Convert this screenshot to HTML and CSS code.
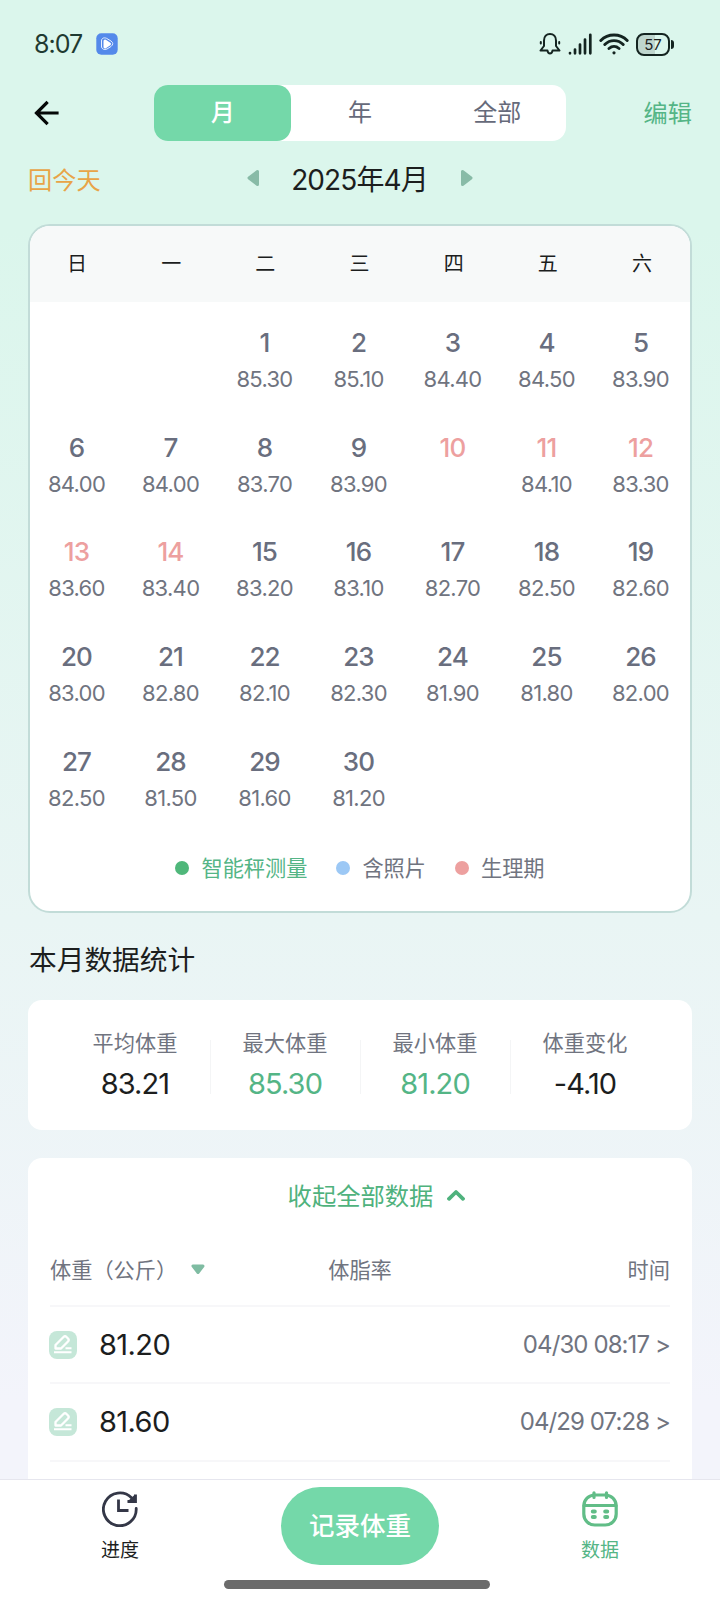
FILE: index.html
```
<!DOCTYPE html>
<html lang="zh-CN">

<head>
    <title>体重数据</title>
    <meta charset="utf-8">
    <meta name="viewport" content="width=device-width, initial-scale=1">
    <link rel="stylesheet" href="styles.css">
</head>

<body>
<div class="status-bar">
    <span class="clock">8:07</span>
    <svg class="app-icon" width="22" height="22" viewBox="0 0 22 22">
        <rect x="0.3" y="0.3" width="21.4" height="21.4" rx="5" fill="#5489ea"/>
        <path d="M5.500 8C5.500 5 8 4.300 10.500 5.300L15 8Q18.500 10.500 15 13.500L11 16C8 17.200 6 16 5.500 14Z" fill="#5489ea" stroke="#e6efff" stroke-width="1"/>
        <path d="M9 8L13.500 11L9 14Z" fill="#fff" stroke="#fff" stroke-width="3" stroke-linejoin="round"/>
    </svg>
    <div class="status-icons">
        <svg width="22" height="24" viewBox="0 0 22 24" fill="none" stroke="#142420" stroke-width="2" stroke-linejoin="round" stroke-linecap="round">
            <path d="M5 14V8.500C5 4.500 7.500 2 11 2S17 4.500 17 8.500V14L20.500 18.500H13.500C13 22.500 9 22.500 8.500 18.500H1.500Z"/>
            <path d="M1.800 10V11.500M20.200 10V11.500"/>
        </svg>
        <svg width="24" height="22" viewBox="0 0 24 22" fill="none" stroke="#142420" stroke-width="2.700" stroke-linecap="round">
            <path d="M2 20V20.300M7 16.500V20.300M12 11.500V20.300M17 6.500V20.300M22.300 1.800V20.300"/>
        </svg>
        <svg width="30" height="22" viewBox="0 0 30 22" fill="none" stroke="#142420" stroke-width="2.900" stroke-linecap="round">
            <path d="M1.800 7.500C9 0.200 21 0.200 28.200 7.500M5.800 11.500C11 6.300 19 6.300 24.200 11.500M10 15.500C13 12.900 17 12.900 20 15.500"/>
            <circle cx="15" cy="19.800" r="1.600" fill="#142420" stroke="none"/>
        </svg>
        <div class="battery"><span>57</span></div>
    </div>
</div>

<div class="header">
    <svg class="back" width="26" height="26" viewBox="0 0 26 26" fill="none" stroke="#050807" stroke-width="3.200" stroke-linecap="square">
        <path d="M23 13H3M12.500 3L2.500 13L12.500 23"/>
    </svg>
    <div class="tabs">
        <div class="tab tab-active">月</div>
        <div class="tab">年</div>
        <div class="tab">全部</div>
    </div>
    <div class="edit">编辑</div>
</div>

<div class="month-bar">
    <div class="today">回今天</div>
    <div class="month">
        <svg width="12" height="18" viewBox="0 0 12 18"><path d="M10.500 2.500V15.500L2 9Z" fill="#88bba7" stroke="#88bba7" stroke-width="3" stroke-linejoin="round"/></svg>
        <span class="month-name">2025年4月</span>
        <svg width="12" height="18" viewBox="0 0 12 18"><path d="M1.500 2.500V15.500L10 9Z" fill="#88bba7" stroke="#88bba7" stroke-width="3" stroke-linejoin="round"/></svg>
    </div>
</div>

<div class="calendar">
    <div class="week">
        <div>日</div>
        <div>一</div>
        <div>二</div>
        <div>三</div>
        <div>四</div>
        <div>五</div>
        <div>六</div>
    </div>
    <div id="days" class="days"></div>
    <div class="legend">
        <div class="legend-item legend-scale">智能秤测量</div>
        <div class="legend-item legend-photo">含照片</div>
        <div class="legend-item legend-period">生理期</div>
    </div>
</div>

<script>
        // Calendar
        const weights = [
            '85.30', '85.10', '84.40', '84.50', '83.90',
            '84.00', '84.00', '83.70', '83.90', '', '84.10', '83.30',
            '83.60', '83.40', '83.20', '83.10', '82.70', '82.50', '82.60',
            '83.00', '82.80', '82.10', '82.30', '81.90', '81.80', '82.00',
            '82.50', '81.50', '81.60', '81.20'
        ];
        const firstWeekday = 2;
        let html = '';
        for (let i = 0; i < firstWeekday; i++) {
            html += '<div class="day"></div>';
        }
        weights.forEach((weight, i) => {
            const day = i + 1;
            const period = day >= 10 && day <= 14;
            html += `<div class="day"><div class="day-number${period ? ' period' : ''}">${day}</div><div class="day-weight">${weight}</div></div>`;
        });
        document.getElementById('days').innerHTML = html;
    </script>

<div class="title">本月数据统计</div>
<div class="stats">
    <div class="stat">
        <div class="stat-label">平均体重</div>
        <div class="stat-value">83.21</div>
    </div>
    <div class="stat">
        <div class="stat-label">最大体重</div>
        <div class="stat-value green">85.30</div>
    </div>
    <div class="stat">
        <div class="stat-label">最小体重</div>
        <div class="stat-value green">81.20</div>
    </div>
    <div class="stat">
        <div class="stat-label">体重变化</div>
        <div class="stat-value">-4.10</div>
    </div>
</div>

<div class="records">
    <div class="toggle">
        收起全部数据
        <svg width="18" height="12" viewBox="0 0 18 12" fill="none" stroke="#4fb27d" stroke-width="3.800" stroke-linecap="round" stroke-linejoin="round"><path d="M2 9.800L9 3L16 9.800"/></svg>
    </div>
    <div class="record-head">
        <div class="head-weight">体重（公斤）<svg width="14" height="11" viewBox="0 0 14 11"><path d="M2 2H12L7 8.500Z" fill="#7fbca2" stroke="#7fbca2" stroke-width="3" stroke-linejoin="round"/></svg></div>
        <div class="head-fat">体脂率</div>
        <div class="head-time">时间</div>
    </div>
    <div class="record">
        <svg width="28" height="28" viewBox="0 0 28 28">
            <rect width="28" height="28" rx="8" fill="#c5e7d8"/>
            <path d="M6.500 17.500V14L14.500 6Q16 4.500 17.500 6L19 7.500Q20.500 9 19 10.500L12 17.500Z" fill="none" stroke="#fff" stroke-width="2.300" stroke-linejoin="round"/>
            <path d="M5 21.200H22.500M16.500 17.200H22.500" stroke="#fff" stroke-width="2.100"/>
        </svg>
        <div class="record-weight">81.20</div>
        <div class="record-time">04/30 08:17 &gt;</div>
    </div>
    <div class="record">
        <svg width="28" height="28" viewBox="0 0 28 28">
            <rect width="28" height="28" rx="8" fill="#c5e7d8"/>
            <path d="M6.500 17.500V14L14.500 6Q16 4.500 17.500 6L19 7.500Q20.500 9 19 10.500L12 17.500Z" fill="none" stroke="#fff" stroke-width="2.300" stroke-linejoin="round"/>
            <path d="M5 21.200H22.500M16.500 17.200H22.500" stroke="#fff" stroke-width="2.100"/>
        </svg>
        <div class="record-weight">81.60</div>
        <div class="record-time">04/29 07:28 &gt;</div>
    </div>
</div>

<div class="nav">
    <div class="nav-row">
        <div class="nav-item">
            <svg width="36" height="36" viewBox="0 0 36 36" fill="none" stroke="#343747" stroke-width="2.800">
                <path d="M34.200 17.500A16.400 16.400 0 1 1 29.500 6.800" stroke-linecap="round"/>
                <path d="M16.500 8.500V19.500H26.500"/>
                <path d="M33 3.500V10.500H25.500Z" fill="#343747" stroke="none"/>
                <path d="M33.500 3.500V10.500H25.500"/>
            </svg>
            <div>进度</div>
        </div>
        <div class="nav-button">记录体重</div>
        <div class="nav-item nav-item-active">
            <svg width="36" height="36" viewBox="0 0 36 36" fill="none" stroke="#61bd87" stroke-width="3.200" stroke-linecap="round">
                <rect x="1.800" y="4" width="32.400" height="30" rx="11"/>
                <path d="M2 14.500H34M12 1.800V6.500M24.500 1.800V6.500"/>
                <path d="M10.800 20.500H12.800M23.200 20.500H25.200M10.800 26H12.800M23.200 26H25.200" stroke-width="4"/>
            </svg>
            <div>数据</div>
        </div>
    </div>
    <div class="home-bar"></div>
</div>
</body>

</html>
```
FILE: styles.css
```
* {
    box-sizing: border-box;
}

body {
    display: flex;
    flex-direction: column;
    height: 1600px;
    margin: 0;
    overflow: hidden;
    background: linear-gradient(#dbf6ec 0, #dbf6ec 230px, #e9f5f4 920px, #f3f4fb 1400px);
    color: #1c1e1e;
    font-family: Inter, "Noto Sans CJK SC", sans-serif;
}

.status-bar {
    display: flex;
    align-items: center;
    height: 88px;
    padding: 0 46px 0 34px;
    flex-shrink: 0;
}

.clock {
    width: 62px;
    font-size: 25px;
    letter-spacing: -1px;
    color: #1f3a31;
}

.status-icons {
    display: flex;
    align-items: center;
    gap: 7px;
    margin-left: auto;
}

.battery {
    position: relative;
    width: 34px;
    height: 23px;
    margin-right: 4px;
    border: 2px solid #142420;
    border-radius: 8px;
    background: linear-gradient(90deg, #bfd6ce 57%, transparent 57%);
    font-size: 15px;
    line-height: 19px;
    text-align: center;
}

.battery::after {
    content: "";
    position: absolute;
    top: 5px;
    right: -6px;
    width: 3px;
    height: 9px;
    border-radius: 0 3px 3px 0;
    background: #142420;
}

.header {
    display: flex;
    align-items: center;
    height: 50px;
    padding: 0 28px 0 34px;
    flex-shrink: 0;
}

.tabs {
    display: flex;
    width: 412px;
    height: 56px;
    margin-left: 94px;
    border-radius: 14px;
    background: white;
}

.tab {
    flex: 1;
    border-radius: 14px;
    color: #666a7a;
    font-size: 24px;
    line-height: 56px;
    text-align: center;
}

.tab-active {
    background: #74d8a9;
    color: white;
    font-weight: 500;
}

.edit {
    margin-left: auto;
    padding-bottom: 4px;
    color: #54b586;
    font-size: 24.200px;
}

.month-bar {
    display: grid;
    grid-template-columns: 1fr 238px 1fr;
    align-items: center;
    height: 86px;
    padding: 0 28px 6px;
    flex-shrink: 0;
}

.today {
    color: #e8a447;
    font-size: 24.200px;
}

.month {
    display: flex;
    align-items: center;
    justify-content: space-between;
    padding: 0 6px;
}

.month-name {
    margin-left: -1px;
    font-size: 28px;
    letter-spacing: -0.900px;
}

.calendar {
    height: 689px;
    margin: 0 28px;
    border: 2px solid #c2dcd8;
    border-radius: 22px;
    background: white;
    overflow: hidden;
    flex-shrink: 0;
}

.week {
    display: grid;
    grid-template-columns: repeat(7, 1fr);
    padding-right: 1px;
    background: #f7f9f9;
    font-size: 20px;
    line-height: 76px;
    text-align: center;
}

.days {
    display: grid;
    grid-template-columns: repeat(7, 1fr);
    grid-auto-rows: 104.700px;
    height: 524px;
    padding-right: 2px;
    text-align: center;
}

.day {
    padding: 24px 1px 0 0;
}

.day-number {
    color: #696e7e;
    font-size: 26px;
    font-weight: 500;
    line-height: 34px;
    letter-spacing: -0.900px;
}

.period {
    color: #eda09f;
}

.day-weight {
    color: #70747f;
    font-size: 22px;
    line-height: 39px;
    letter-spacing: -0.700px;
}

.legend {
    display: flex;
    justify-content: center;
    gap: 29px;
    line-height: 84px;
}

.legend-item {
    display: flex;
    align-items: center;
    gap: 12px;
    color: #70747f;
    font-size: 21.200px;
}

.legend-item::before {
    content: "";
    width: 14px;
    height: 14px;
    border-radius: 50%;
}

.legend-scale {
    color: #54b586;
}

.legend-scale::before {
    background: #4fb77a;
}

.legend-photo::before {
    background: #9cc8f5;
}

.legend-period::before {
    background: #eda09f;
}

.title {
    height: 87px;
    padding: 3px 29px 0;
    font-size: 27.700px;
    line-height: 88px;
    flex-shrink: 0;
}

.stats {
    display: flex;
    height: 130px;
    margin: 0 28px 28px;
    padding: 24px 32px;
    border-radius: 14px;
    background: white;
    text-align: center;
    flex-shrink: 0;
}

.stat {
    position: relative;
    flex: 1;
}

.stat + .stat::before {
    content: "";
    position: absolute;
    top: 16px;
    left: 0;
    width: 1px;
    height: 54px;
    background: #f4f5f6;
}

.stat-label {
    color: #70747f;
    font-size: 21.200px;
    line-height: 38px;
}

.stat-value {
    font-size: 29px;
    line-height: 43px;
    letter-spacing: -0.900px;
}

.green {
    color: #54b586;
}

.records {
    flex: 1;
    margin: 0 28px;
    padding: 0 22px;
    border-radius: 14px 14px 0 0;
    background: white;
}

.toggle {
    display: flex;
    align-items: center;
    justify-content: center;
    gap: 14px;
    height: 73px;
    padding-left: 33px;
    color: #4fb27d;
    font-size: 24.300px;
}

.record-head {
    display: grid;
    grid-template-columns: 1fr 1fr 1fr;
    height: 76px;
    padding-top: 5px;
    border-bottom: 2px solid #f7f7f9;
    color: #70747f;
    font-size: 21.200px;
    line-height: 69px;
}

.head-weight {
    white-space: nowrap;
}

.head-weight svg {
    margin-left: 14px;
    vertical-align: 3px;
}

.head-fat {
    text-align: center;
}

.head-time {
    text-align: right;
}

.record {
    display: flex;
    align-items: center;
    height: 77.300px;
    border-bottom: 2px solid #f7f7f9;
}

.record svg {
    margin-left: -1px;
}

.record-weight {
    margin-left: 22px;
    font-size: 29px;
    letter-spacing: -0.600px;
}

.record-time {
    margin-left: auto;
    color: #70747f;
    font-size: 24px;
    letter-spacing: -0.900px;
}

.nav {
    height: 121px;
    border-top: 1px solid #e6e6ee;
    background: white;
    flex-shrink: 0;
}

.nav-row {
    display: grid;
    grid-template-columns: 240px 240px 240px;
    justify-items: center;
    height: 100px;
    padding-top: 7px;
}

.nav-item {
    padding-top: 4px;
    font-size: 19px;
    line-height: 30px;
    text-align: center;
}

.nav-item svg {
    display: block;
    margin: 0 auto 9px;
}

.nav-item-active {
    color: #54b586;
}

.nav-button {
    width: 158px;
    height: 78px;
    border-radius: 39px;
    background: #74d8a9;
    color: white;
    font-size: 25.500px;
    font-weight: 500;
    line-height: 78px;
    text-align: center;
}

.home-bar {
    width: 266px;
    height: 9px;
    margin: 0 0 0 224px;
    border-radius: 5px;
    background: #6b6b6b;
}
```
